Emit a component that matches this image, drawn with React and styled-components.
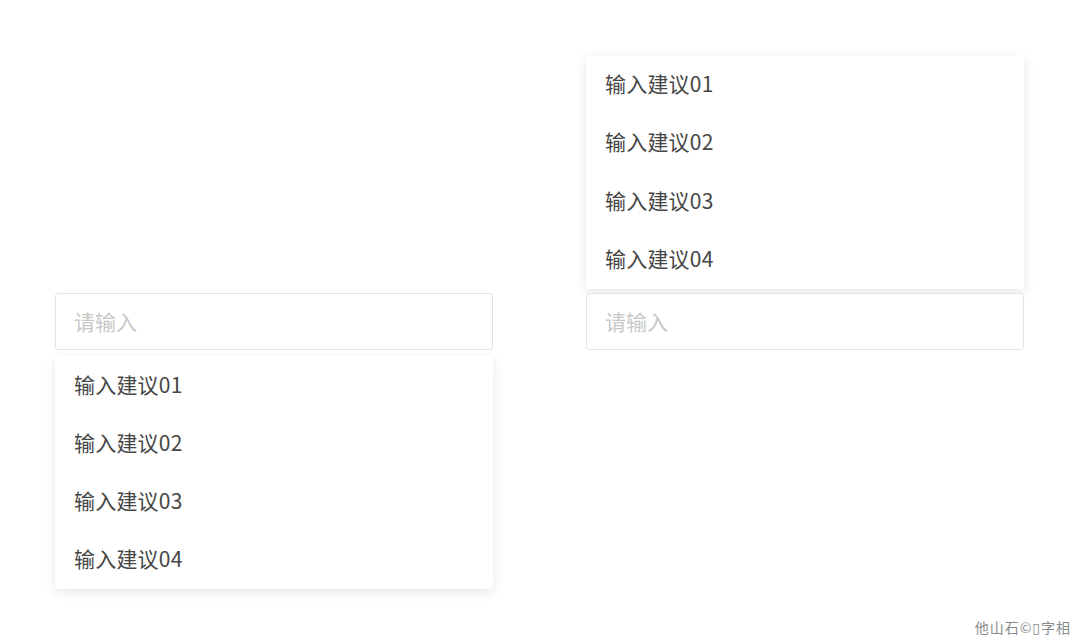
import React from "react";
import styled, { createGlobalStyle } from "styled-components";

const Global = createGlobalStyle`
  html, body { margin: 0; padding: 0; background: #fff; }
  body { font-family: "Noto Sans CJK SC", "Noto Sans", sans-serif; }
`;

const Page = styled.div`
  position: relative;
  width: 1080px;
  height: 644px;
  box-sizing: border-box;
  padding: 55px 0 0 55px;
  display: grid;
  grid-template-columns: 438px 438px;
  grid-template-rows: 234px 57px auto;
  column-gap: 93px;
  row-gap: 4px;
  align-content: start;
`;

const Input = styled.div`
  grid-column: ${(p) => p.col};
  grid-row: 2;
  box-sizing: border-box;
  height: 57px;
  border: 1px solid #e4e4e4;
  border-radius: 3px;
  padding: 0 18px 2px;
  display: flex;
  align-items: center;
  font-size: 21px;
  color: #c8c8c8;
  background: #fff;
`;

const Menu = styled.ul`
  grid-column: ${(p) => p.col};
  grid-row: ${(p) => p.row};
  margin: ${(p) => (p.row === 3 ? "2px 0 0" : "0")};
  padding: 0;
  list-style: none;
  background: #fff;
  border-radius: 2px;
  box-shadow: 0 3px 12px rgba(0, 0, 0, 0.1);
  height: ${(p) => (p.row === 3 ? "233px" : "234px")};
  display: flex;
  flex-direction: column;
`;

const Item = styled.li`
  flex: 1;
  display: flex;
  align-items: center;
  padding: 0 19px 3px;
  font-size: 21px;
  letter-spacing: 0.2px;
  color: #464646;
`;

const Watermark = styled.div`
  position: absolute;
  right: 9px;
  bottom: 7px;
  font-size: 14px;
  letter-spacing: 1px;
  color: #8a8a8a;
  font-family: "Noto Sans CJK SC", "DejaVu Sans", sans-serif;
`;

const items = ["输入建议01", "输入建议02", "输入建议03", "输入建议04"];

export default function App() {
  return (
    <>
      <Global />
      <Page>
        <Menu col={2} row={1}>
          {items.map((t) => (
            <Item key={t}>{t}</Item>
          ))}
        </Menu>
        <Input col={1}>请输入</Input>
        <Input col={2}>请输入</Input>
        <Menu col={1} row={3}>
          {items.map((t) => (
            <Item key={t}>{t}</Item>
          ))}
        </Menu>
        <Watermark>他山石©▯字相</Watermark>
      </Page>
    </>
  );
}
